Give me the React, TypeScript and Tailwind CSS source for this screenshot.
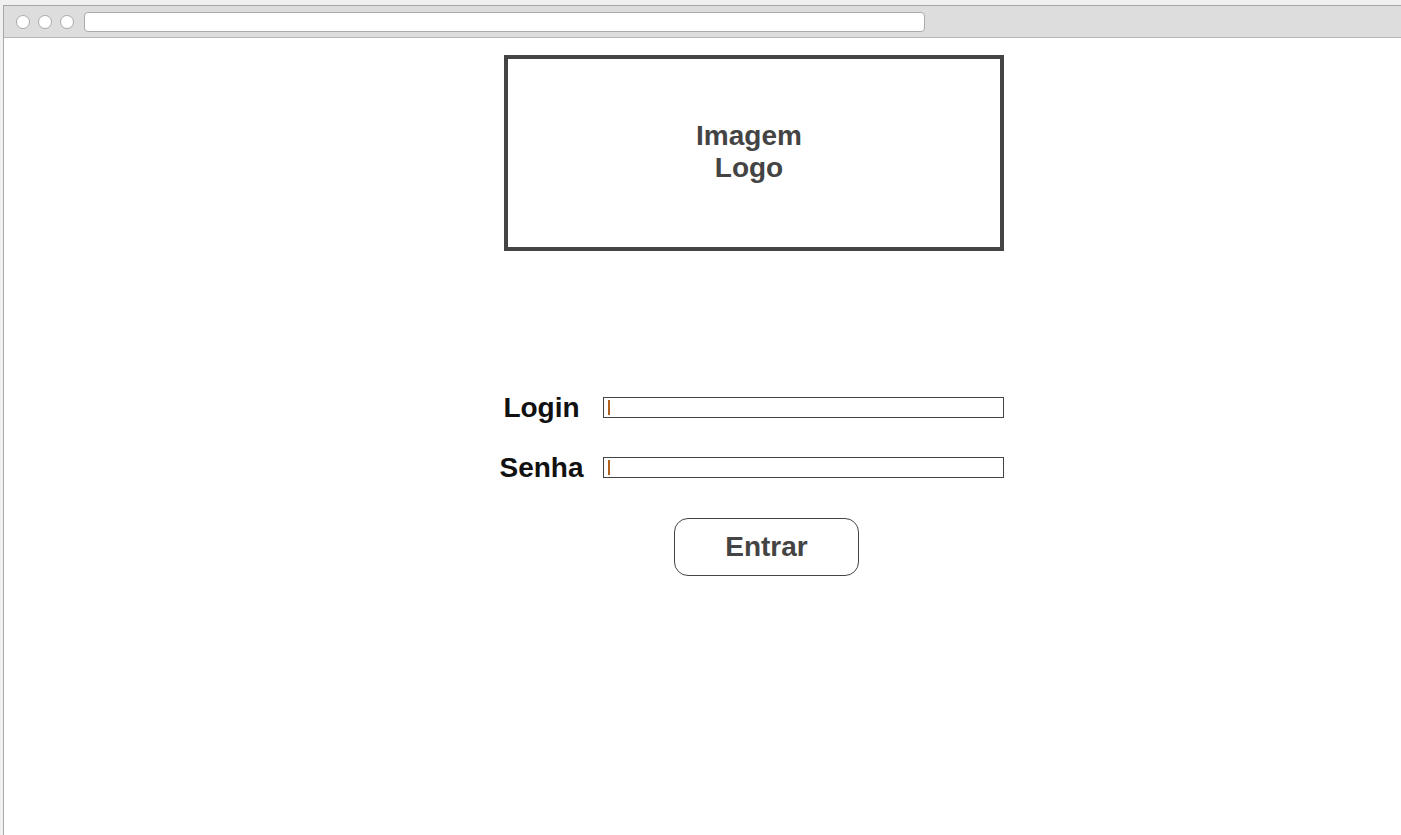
import React from "react";

const Field: React.FC<{ label: string }> = ({ label }) => (
  <div className="flex items-center">
    <span className="w-[95px] pt-[2px] text-center text-[28px] font-bold leading-none text-[#111]">{label}</span>
    <div className="ml-[14px] flex h-[21px] w-[401px] items-center border border-[#444] bg-white pl-[4px]">
      <span className="h-[15px] w-[2px] bg-[#b0601f]" />
    </div>
  </div>
);

const App: React.FC = () => {
  return (
    <div className="h-[835px] w-[1401px] overflow-hidden bg-[#f0f0f0] pl-[3px] pt-[5px] font-['Liberation_Sans',Arial,sans-serif]">
      <div className="flex h-full flex-col border-l border-t border-[#a8a8a8] bg-white">
        <div className="flex h-[32px] items-center border-b border-[#b8b8b8] bg-[#dddddd] pl-[12px]">
          <div className="flex gap-[8px]">
            <span className="h-[14px] w-[14px] rounded-full border border-[#aaa] bg-white" />
            <span className="h-[14px] w-[14px] rounded-full border border-[#aaa] bg-white" />
            <span className="h-[14px] w-[14px] rounded-full border border-[#aaa] bg-white" />
          </div>
          <div className="ml-[10px] h-[20px] w-[841px] rounded-[4px] border border-[#aaa] bg-white" />
        </div>

        <div className="flex flex-col pl-[490px] pt-[17px]">
          <div className="ml-[10px] flex h-[196px] w-[500px] items-center justify-center border-4 border-[#444] text-center text-[28px] font-bold leading-[32px] text-[#444]">
            <div className="-ml-[10px] -mt-[2px]">
              Imagem
              <br />
              Logo
            </div>
          </div>

          <div className="mt-[141px] flex flex-col gap-[30px]">
            <Field label="Login" />
            <Field label="Senha" />
          </div>

          <button className="ml-[180px] mt-[36px] flex h-[58px] w-[185px] items-center justify-center rounded-[14px] border border-[#444] bg-white text-[28px] font-bold text-[#444]">
            Entrar
          </button>
        </div>
      </div>
    </div>
  );
};

export default App;
